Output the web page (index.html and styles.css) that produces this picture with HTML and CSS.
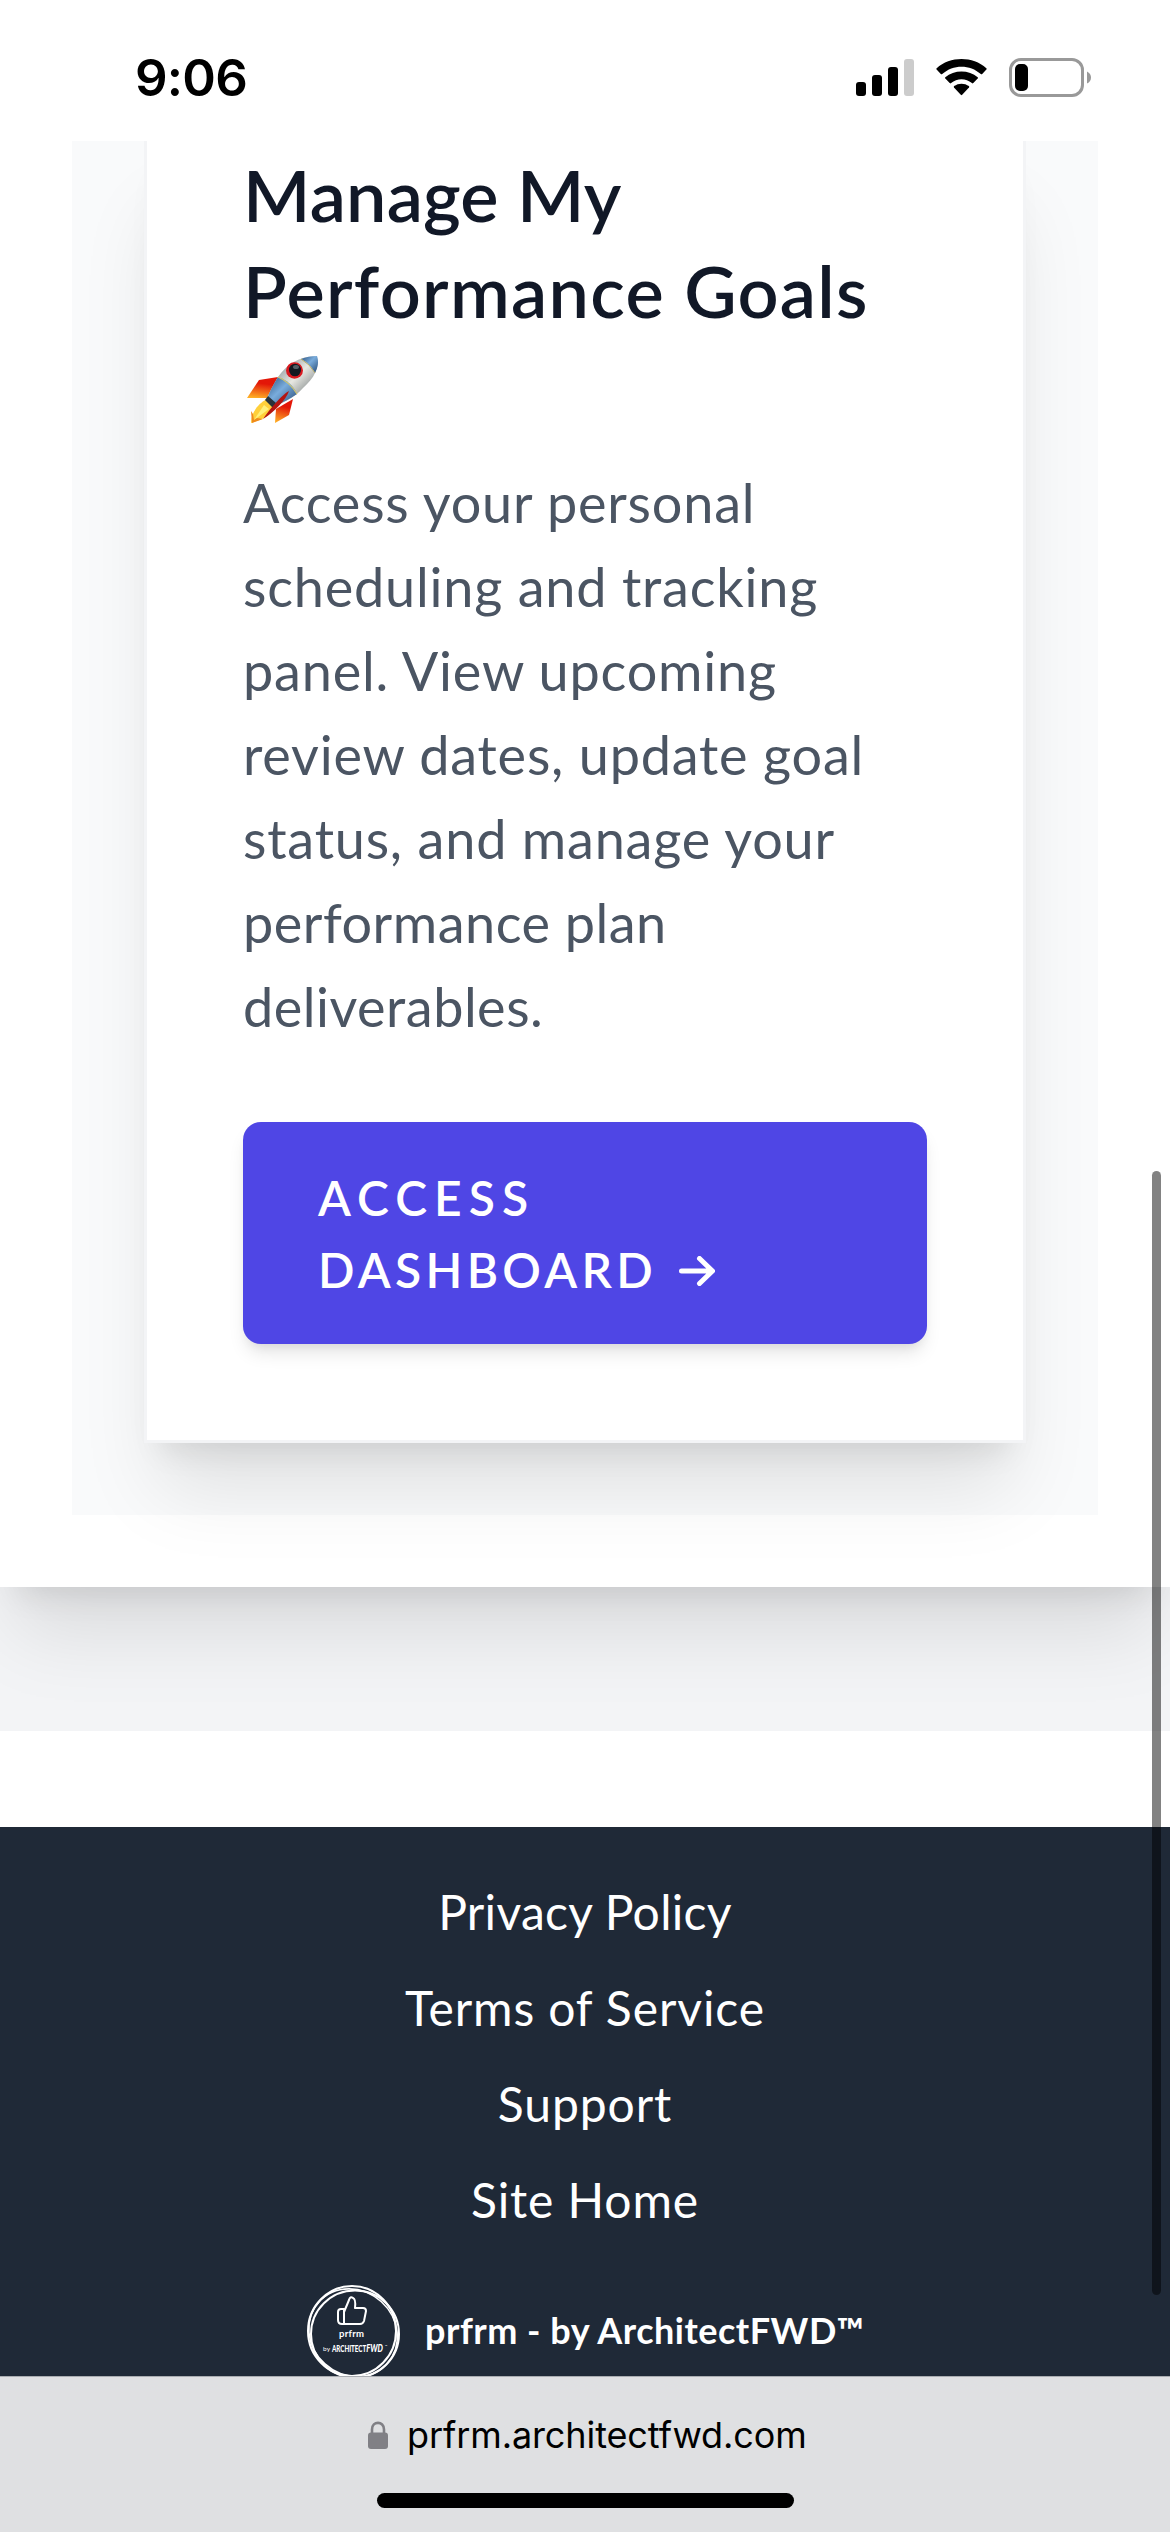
FILE: index.html
```html
<!DOCTYPE html>
<html lang="en">
  <head>
    <meta charset="UTF-8" />
    <meta name="viewport" content="width=device-width, initial-scale=1.0" />
    <title>prfrm - by ArchitectFWD</title>
    <link rel="stylesheet" href="styles.css">
  </head>

  <body>
    <header class="status-bar">
      <span class="status-time">9:06</span>
      <div class="status-icons">
        <svg class="signal" width="58" height="37" viewBox="0 0 58 37">
          <rect x="0" y="23" width="10" height="14" rx="3" />
          <rect x="16" y="16" width="10" height="21" rx="3" />
          <rect x="32" y="8" width="10" height="29" rx="3" />
          <rect x="48" y="0" width="10" height="37" rx="3" fill="#ccc" />
        </svg>
        <svg class="wifi" width="51" height="37" viewBox="0 0 51 37">
          <path d="M0.6 10.6Q0 10 .7 9.3C14-3 37-3 50.300 9.300Q51 10 50.400 10.600L46.200 15Q45.500 15.700 44.800 15C34 5.200 17 5.200 6.200 15Q5.500 15.700 4.800 15Z" />
          <path d="M9.300 19.600Q8.600 18.900 9.300 18.200C18 10.700 33 10.700 41.700 18.200Q42.400 18.900 41.700 19.600L37.300 24.100Q36.600 24.700 35.900 24.100C30 19 21 19 15.100 24.100Q14.400 24.700 13.700 24.100Z" />
          <path d="M18 28.400Q17.400 27.700 18.100 27.100C22.400 23.800 28.600 23.800 32.900 27.100Q33.600 27.700 33 28.400L26.200 35.800Q25.500 36.500 24.800 35.800Z" />
        </svg>
        <svg class="battery" width="82" height="39" viewBox="0 0 82 39">
          <rect x="1.500" y="1.500" width="72" height="36" rx="10.500" fill="none" stroke="#999" stroke-width="3" />
          <rect x="6" y="6" width="13" height="27" rx="5" />
          <path d="M78 13.500Q82 15.500 82 19.500Q82 23.500 78 25.500Z" fill="#999" />
        </svg>
      </div>
    </header>

    <main class="page">
      <section class="section">
        <div class="panel">
          <div class="card">
            <h2 class="card-title">
              <span class="line title-one">Manage My</span>
              <span class="line title-two">Performance Goals</span>
              <svg class="rocket" width="78" height="72" viewBox="0 0 78 72">
                <defs>
                  <linearGradient id="hull" x1="0" y1="0" x2="1" y2="1">
                    <stop offset="0.200" stop-color="#8b979c" />
                    <stop offset="0.500" stop-color="#e8e8e2" />
                    <stop offset="0.850" stop-color="#70797c" />
                  </linearGradient>
                  <linearGradient id="blue" x1="0" y1="0" x2="1" y2="1">
                    <stop offset="0" stop-color="#294f7c" />
                    <stop offset="0.450" stop-color="#79acdc" />
                    <stop offset="1" stop-color="#264873" />
                  </linearGradient>
                  <linearGradient id="fin" x1="0.500" y1="0" x2="0.300" y2="1">
                    <stop offset="0.300" stop-color="#e31708" />
                    <stop offset="1" stop-color="#ffae25" />
                  </linearGradient>
                </defs>
                <path d="M35 22L16 25L4 43L24 43Z" fill="url(#fin)" />
                <path d="M50 44L33 54L32 68L46 60Z" fill="url(#fin)" />
                <path d="M24 44C16 48 8 57 8 68C22 64 29 59 33 51Z" fill="#ffd03a" />
                <path d="M21 50L11 65L26 54Z" fill="#fff07a" />
                <path d="M8 56L9 68L20 64L14 63L11 65L10 59Z" fill="#ef8a1c" />
                <path d="M74 1C56 1 43 10 35 22C30 30 26 38 24 44L31 51C41 48 52 42 60 33C71 23 77 13 74 1Z" fill="url(#hull)" />
                <path d="M35 22C30 30 26 38 24 44L31 51C39 48 47 44 54 39C50 30 44 25 35 22Z" fill="url(#blue)" />
                <path d="M74 1C68 1 63 2 58 4C64 7 69 12 72 18C75 12 76 7 74 1Z" fill="url(#blue)" />
                <path d="M35 22Q47 27 54 39" fill="none" stroke="#d4c66c" stroke-width="1.200" />
                <path d="M58 4Q67 9 72 18" fill="none" stroke="#b9ad68" stroke-width="1" />
                <path d="M25 41L33 48L30 53L22 45Z" fill="#29323a" />
                <path d="M46 36C40 39 28 52 20 64C31 57 43 45 46 36Z" fill="#b51410" />
                <ellipse cx="51.500" cy="15.500" rx="8.500" ry="8.300" fill="#d91a20" />
                <ellipse cx="52" cy="15" rx="6" ry="6.300" fill="#121820" />
                <ellipse cx="53" cy="12" rx="3" ry="2" fill="#525d65" />
              </svg>
            </h2>
            <p class="card-text">
              <span class="line">Access your personal</span>
              <span class="line">scheduling and tracking</span>
              <span class="line">panel. View upcoming</span>
              <span class="line">review dates, update goal</span>
              <span class="line">status, and manage your</span>
              <span class="line text-end">performance plan</span>
              <span class="line text-end">deliverables.</span>
            </p>
            <a class="button" href="#">
              <span class="line button-top">ACCESS</span>
              <span class="line button-bottom">DASHBOARD
                <svg class="arrow" width="36" height="30" viewBox="0 0 36 30">
                  <path d="M2.500 15H33M20.500 2.500L33.500 15L20.500 27.500" />
                </svg>
              </span>
            </a>
          </div>
        </div>
      </section>
    </main>

    <footer class="footer">
      <nav class="footer-links">
        <a class="link-privacy" href="#">Privacy Policy</a>
        <a href="#">Terms of Service</a>
        <a href="#">Support</a>
        <a href="#">Site Home</a>
      </nav>
      <div class="footer-brand">
        <svg class="logo" width="96" height="96" viewBox="0 0 96 96">
          <g fill="none" stroke="#fff">
            <ellipse cx="47" cy="47" rx="44" ry="45" stroke-width="2" />
            <ellipse cx="50" cy="50" rx="44" ry="43.500" stroke-width="2" />
            <ellipse cx="48.500" cy="48.500" rx="46" ry="42" stroke-width="1.600" transform="rotate(42 48 48)" />
            <path stroke-width="2" stroke-linejoin="round" d="M39 28L44 16Q45 12 48 14Q51 15 50 24H58Q61 24 61 27L59 37Q58 40 55 40H37Q33 40 33 36V28Q33 25 36 25H39V40" />
          </g>
          <text x="34" y="52.500" font-size="9.500" font-weight="700" textLength="25">prfrm</text>
          <text x="18" y="67" font-size="6.500" textLength="7">by</text>
          <text class="logo-name" x="27" y="68" textLength="51" lengthAdjust="spacingAndGlyphs">ARCHITECT<tspan class="logo-fwd">FWD</tspan></text>
          <text x="80" y="63" font-size="3">™</text>
        </svg>
        <span class="brand-text">prfrm - by ArchitectFWD™</span>
      </div>
    </footer>

    <div class="browser-bar">
      <div class="address">
        <svg class="lock" width="20" height="28" viewBox="0 0 20 28">
          <rect x="0" y="11.500" width="20" height="16.500" rx="3" fill="#808085" />
          <path d="M4 13V8.500C4 -.300 16 -.300 16 8.500V13" fill="none" stroke="#808085" stroke-width="2.600" />
        </svg>
        <span class="address-text">prfrm.architectfwd.com</span>
      </div>
      <div class="home-indicator"></div>
    </div>

    <div class="scrollbar"></div>
  </body>
</html>
```
FILE: styles.css
```css
* {
  margin: 0;
  padding: 0;
  box-sizing: border-box;
}

body {
  position: relative;
  width: 1170px;
  height: 2532px;
  overflow: hidden;
  display: flex;
  flex-direction: column;
  background: #fff;
  font-family: Lato, "Open Sans", sans-serif;
}

a {
  color: inherit;
  text-decoration: none;
}

.line {
  display: block;
  white-space: nowrap;
}

/* status bar */
.status-bar {
  height: 141px;
  flex: none;
  display: flex;
  justify-content: space-between;
  padding: 58px 79px 0 135px;
  background: #fff;
  position: relative;
  z-index: 1;
}

.status-time {
  font-family: Inter, sans-serif;
  font-size: 51px;
  font-weight: 600;
  line-height: 40px;
  letter-spacing: -0.8px;
}

.status-icons {
  display: flex;
  align-items: flex-start;
}

.signal {
  margin: 1px 22px 0 0;
}

.wifi {
  margin: 1px 22px 0 0;
}

/* page */
.page {
  height: 1590px;
  flex: none;
  background: #f3f4f6;
  overflow: hidden;
}

.section {
  height: 1446px;
  padding: 0 72px 72px;
  background: #fff;
  box-shadow: 0 60px 75px -15px rgba(0, 0, 0, 0.1), 0 24px 30px -18px rgba(0, 0, 0, 0.1);
}

.panel {
  height: 1374px;
  padding: 0 72px 72px;
  background: #f9fafb;
}

.card {
  height: 1302px;
  padding: 5px 96px 96px;
  background: #fff;
  border: 3px solid #f3f4f6;
  border-top: none;
  box-shadow: 0 60px 75px -15px rgba(0, 0, 0, 0.1), 0 24px 30px -18px rgba(0, 0, 0, 0.1);
}

.card-title {
  height: 288px;
  color: #111827;
  font-size: 72px;
  font-weight: 600;
  line-height: 96px;
}

.title-one {
  letter-spacing: 0.2px;
}

.title-two {
  letter-spacing: 1.3px;
}

.rocket {
  display: block;
  margin-top: 17px;
}

.card-text {
  margin-top: 27px;
  color: #4b5563;
  font-size: 54px;
  line-height: 84px;
  letter-spacing: 0.8px;
}

.text-end {
  letter-spacing: 0.5px;
}

.button {
  display: block;
  height: 222px;
  margin-top: 73px;
  padding: 40px 75px 38px;
  background: #4f46e5;
  border-radius: 18px;
  box-shadow: 0 12px 18px -3px rgba(0, 0, 0, 0.1), 0 6px 12px -6px rgba(0, 0, 0, 0.1);
  color: #fff;
  font-size: 48px;
  font-weight: 600;
  line-height: 72px;
}

.button-top {
  letter-spacing: 7px;
}

.button-bottom {
  letter-spacing: 4.3px;
}

.arrow {
  margin: 0 0 2px 6px;
  fill: none;
  stroke: #fff;
  stroke-width: 5;
  stroke-linecap: round;
  stroke-linejoin: round;
}

/* footer */
.footer {
  height: 549px;
  flex: none;
  margin-top: 96px;
  padding-top: 49px;
  background: #1f2937;
  color: #fff;
}

.footer-links {
  display: flex;
  flex-direction: column;
  align-items: center;
  gap: 24px;
  font-size: 48px;
  line-height: 72px;
  letter-spacing: 0.9px;
}

.link-privacy {
  letter-spacing: 0.3px;
}

.footer-brand {
  display: flex;
  align-items: center;
  height: 96px;
  margin: 48px 0 0 305px;
  gap: 24px;
}

.logo {
  fill: #fff;
  font-family: Lato, sans-serif;
}

.logo-name {
  font-size: 9px;
  font-weight: 900;
}

.logo-fwd {
  font-size: 11px;
  font-style: italic;
}

.brand-text {
  padding-bottom: 4px;
  font-size: 36px;
  font-weight: 700;
  letter-spacing: 0.5px;
  white-space: nowrap;
}

/* browser bar */
.browser-bar {
  height: 156px;
  flex: none;
  border-top: 1px solid #a9acb1;
  background: #dfe0e2;
  position: relative;
}

.address {
  display: flex;
  align-items: center;
  height: 48px;
  margin: 34px 0 0 368px;
  gap: 19px;
}

.address-text {
  font-family: Inter, sans-serif;
  font-size: 36px;
  letter-spacing: -0.1px;
}

.home-indicator {
  width: 417px;
  height: 15px;
  margin: 34px auto 0;
  border-radius: 8px;
  background: #000;
}

.scrollbar {
  position: absolute;
  top: 1171px;
  left: 1152px;
  width: 9px;
  height: 1124px;
  border-radius: 5px;
  background: rgba(0, 0, 0, 0.49);
}
```
